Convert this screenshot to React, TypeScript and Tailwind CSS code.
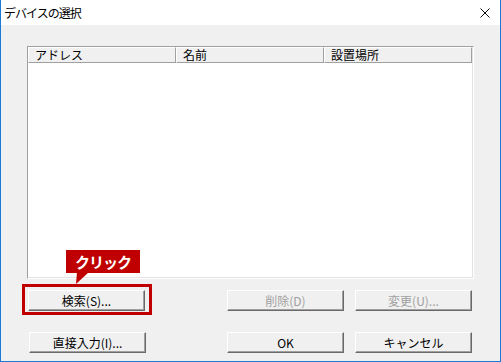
import React, { FC } from "react";

const font = { fontFamily: '"Noto Sans CJK JP", "Noto Sans", sans-serif' };

type BtnProps = { label: string; disabled?: boolean };

const Btn: FC<BtnProps> = ({ label, disabled }) => (
  <div
    className={
      "w-[117px] h-[21px] flex items-center justify-center bg-[#f0f0f0] text-[12px] leading-none border border-t-white border-l-white border-b-[#696969] border-r-[#696969] shadow-[inset_-1px_-1px_0_#a0a0a0] " +
      (disabled ? "text-[#a0a0a0]" : "text-black")
    }
  >
    {label}
  </div>
);

const HeaderCell: FC<{ label: string }> = ({ label }) => (
  <div className="w-[148px] h-[16px] flex items-center pl-[6px] bg-[#f0f0f0] border-t border-l border-t-white border-l-white border-b border-r border-b-[#a0a0a0] border-r-[#a0a0a0] text-[12px] leading-none text-black">
    {label}
  </div>
);

export default function App() {
  return (
    <div
      style={font}
      className="w-[501px] h-[362px] flex flex-col bg-[#f0f0f0] border-l border-r border-b border-[#1a7ad4] select-none"
    >
      {/* title bar */}
      <div className="h-[25px] bg-white flex items-center justify-between pl-[3px] pr-[10px]">
        <span className="text-[12px] tracking-[-1px] text-black pt-[1px]">デバイスの選択</span>
        <svg width="10" height="10" viewBox="0 0 10 10" className="mt-[1px]">
          <path d="M0.5 0.5 L9.5 9.5 M9.5 0.5 L0.5 9.5" stroke="#111" strokeWidth="1" />
        </svg>
      </div>

      {/* body */}
      <div className="flex-1 flex flex-col pl-[26px] pt-[21px]">
        {/* list view */}
        <div className="w-[447px] h-[233px] border-t border-l border-t-[#a0a0a0] border-l-[#a0a0a0] border-b border-r border-b-white border-r-white">
          <div className="w-full h-full bg-white border-b border-r border-b-[#e3e3e3] border-r-[#e3e3e3]">
            <div className="flex">
              <HeaderCell label="アドレス" />
              <HeaderCell label="名前" />
              <HeaderCell label="設置場所" />
            </div>
          </div>
        </div>

        {/* row 1 */}
        <div className="flex mt-[11px] ml-[1px]">
          <div className="relative">
            <Btn label="検索(S)..." />
            {/* highlight */}
            <div className="absolute -left-[6px] -top-[6px] w-[130px] h-[31px] border-[3px] border-[#c00000] pointer-events-none" />
            {/* callout */}
            <div className="absolute left-[38px] -top-[40px] w-[74px] h-[23px] bg-[#c00000] flex items-center justify-center">
              <span className="text-white font-bold text-[15px] tracking-[-1px] leading-none">クリック</span>
            </div>
            <svg className="absolute left-[47px] -top-[18px]" width="14" height="12" viewBox="0 0 14 12">
              <polygon points="2,0 14,0 1,12" fill="#c00000" />
            </svg>
          </div>
          <div className="ml-[82px] flex gap-[11px]">
            <Btn label="削除(D)" disabled />
            <Btn label="変更(U)..." disabled />
          </div>
        </div>

        {/* row 2 */}
        <div className="flex mt-[21px] ml-[2px]">
          <Btn label="直接入力(I)..." />
          <div className="ml-[81px] flex gap-[11px]">
            <Btn label="OK" />
            <Btn label="キャンセル" />
          </div>
        </div>
      </div>
    </div>
  );
}
